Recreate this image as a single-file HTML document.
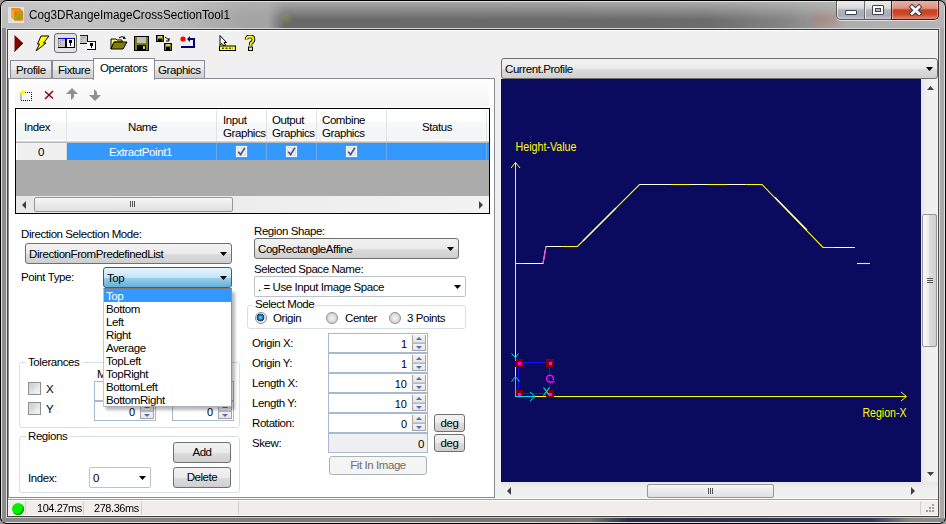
<!DOCTYPE html>
<html><head><meta charset="utf-8">
<style>
*{box-sizing:border-box}
html,body{margin:0;padding:0}
body{width:946px;height:524px;overflow:hidden;position:relative;background:#9a9a9a;font-family:"Liberation Sans",sans-serif;font-size:11px;color:#000}
.a{position:absolute}
.t{position:absolute;white-space:nowrap;line-height:13px;letter-spacing:-0.42px;font-size:11.5px}
.combo{position:absolute;border:1px solid #707070;border-radius:3px;background:linear-gradient(#f2f2f2,#ebebeb 50%,#dddddd 51%,#cfcfcf)}
.combo .arr,.arr{position:absolute;right:4px;top:8px;width:7px;height:4px;background:#000;clip-path:polygon(0 0,100% 0,50% 100%)}
.edit{position:absolute;border:1px solid #bac4d0;border-radius:2px;background:#fff}
.btn{position:absolute;font-size:11.5px;letter-spacing:-0.42px;border:1px solid #707070;border-radius:3px;background:linear-gradient(#f2f2f2,#ebebeb 50%,#dddddd 51%,#cfcfcf);text-align:center;line-height:18px}
.grp{position:absolute;border:1px solid #d5dfe5;border-radius:3px}
.chk{position:absolute;width:13px;height:13px;border:1px solid #8e8f8f;background:linear-gradient(135deg,#cbcfd5,#f6f6f6)}
.chk::after{content:"";position:absolute;left:2px;top:2px;width:7px;height:7px;background:linear-gradient(135deg,#cacdd2,#f4f4f4)}
.spin{position:absolute;border:1px solid #a7b9d1;background:#fff}
.spin .up,.spin .dn{position:absolute;right:1px;width:14px;height:8px;border-left:1px solid #a3a3a3;border-right:1px solid #a3a3a3;background:linear-gradient(#f3f3f3,#e6e6e6)}
.spin .up{top:1px;border-bottom:1px solid #c8c8c8}.spin .dn{top:9px;border-top:1px solid #b8b8b8;border-bottom:1px solid #a3a3a3}
.spin .up::after{content:"";position:absolute;left:3px;top:2px;border-left:3px solid transparent;border-right:3px solid transparent;border-bottom:3px solid #4d6fb8}
.spin .dn::after{content:"";position:absolute;left:3px;top:2px;border-left:3px solid transparent;border-right:3px solid transparent;border-top:3px solid #4d6fb8}
.spin .v{position:absolute;right:20px;top:4px}
</style></head><body>
<!-- window frame -->
<div class="a" style="left:0;top:0;width:946px;height:524px;border-radius:7px;background:#000"></div>
<div class="a" style="left:1px;top:1px;width:944px;height:522px;border-radius:6px;background:#e0e0e0"></div>
<div class="a" style="left:2px;top:2px;width:942px;height:520px;border-radius:5px;background:linear-gradient(90deg,#8c8c8c,#999 30%,#a0a0a0 70%,#a8a8a8)"></div>
<div class="a" style="left:2px;top:2px;width:942px;height:26px;border-radius:5px 5px 0 0;background:linear-gradient(90deg,#bdbdbd,#c2c2c2 8%,#bababa 18%,#a4a4a4 26%,#a5a5a5 60%,#ababab 85%,#b4b4b4)"></div>
<div class="a" style="left:2px;top:2px;width:942px;height:26px;border-radius:5px 5px 0 0;background:linear-gradient(rgba(255,255,255,.12),rgba(255,255,255,0) 60%)"></div>
<div class="a" style="left:268px;top:2px;width:577px;height:26px;background:linear-gradient(rgba(0,0,0,.04),rgba(0,0,0,.22) 40%,rgba(0,0,0,.36) 70%,rgba(0,0,0,.36));-webkit-mask-image:linear-gradient(90deg,transparent,#000 3%,#000 76%,rgba(0,0,0,.6) 90%,transparent)"></div>
<div class="a" style="left:812px;top:14px;width:26px;height:10px;background:rgba(200,90,70,.3);filter:blur(4px)"></div>
<div class="a" style="left:282px;top:14px;width:8px;height:8px;background:rgba(190,160,60,.35);filter:blur(2px)"></div>
<div class="a" style="left:6px;top:28px;width:934px;height:490px;border:1px solid #d8d8d8;border-bottom-color:#c8c8c8"></div>
<!-- app icon -->
<svg class="a" style="left:8px;top:7px" width="16" height="16" viewBox="0 0 16 16">
<rect x="0" y="0" width="16" height="16" fill="#e2e2e2"/>
<path d="M3 1 L11.5 1 L15 4.3 L15 13.5 L6.3 13.5 L3 10.4Z" fill="#f7a23c"/>
<path d="M6.3 4.3 L15 4.3 L15 13.5 L6.3 13.5Z" fill="#e07a08"/>
<path d="M3 1 L11.5 1 L15 4.3 L6.3 4.3Z" fill="#f58c10"/>
<path d="M6 12.5 L9.7 9.2 L9.7 6.4 L13.3 6.4 L13.3 12.5 L15 12.5" stroke="#00ff30" stroke-width="1.2" fill="none"/>
</svg>
<div class="t" style="left:29px;top:7px;font-size:12px;line-height:16px;color:#000;letter-spacing:0;transform:scaleX(0.975);transform-origin:0 0">Cog3DRangeImageCrossSectionTool1</div>
<!-- caption buttons -->
<div class="a" style="left:836px;top:1px;width:56px;height:19px;border:1px solid #5d5d5d;border-top:none;border-radius:0 0 0 5px;background:linear-gradient(#ececec,#dadada 40%,#b0b3ba 50%,#a8abb4 80%,#c4c6cc);box-shadow:0 1px 0 rgba(255,255,255,.6),inset 1px 0 0 rgba(255,255,255,.6)"></div>
<div class="a" style="left:864px;top:1px;width:1px;height:18px;background:#6a6a6a"></div>
<div class="a" style="left:865px;top:1px;width:1px;height:18px;background:#e8e8e8"></div>
<div class="a" style="left:845px;top:10px;width:12px;height:5px;border:1px solid #3a4058;border-radius:1px;background:#fff"></div>
<div class="a" style="left:872px;top:5px;width:12px;height:10px;border:1px solid #3a4058;border-radius:1px;background:#fff"></div>
<div class="a" style="left:875px;top:8px;width:6px;height:4px;border:1px solid #3a4058;background:#b8b8b8"></div>
<div class="a" style="left:891px;top:1px;width:48px;height:19px;border:1px solid #5a1408;border-top:none;border-radius:0 0 5px 0;background:linear-gradient(#eab2a4,#dc9080 40%,#c8401f 50%,#cc4a2c 75%,#e08a70);box-shadow:0 1px 0 rgba(255,255,255,.6),inset 1px 0 0 rgba(255,220,210,.5),inset -1px 0 0 rgba(255,220,210,.5)"></div>
<svg class="a" style="left:909px;top:4px" width="13" height="12" viewBox="0 0 13 12"><path d="M3 3 L10 9.5 M10 3 L3 9.5" stroke="#353a4c" stroke-width="4.8" stroke-linecap="square"/><path d="M3 3 L10 9.5 M10 3 L3 9.5" stroke="#fafafa" stroke-width="2.8" stroke-linecap="square"/></svg>
<!-- client area -->
<div class="a" style="left:7px;top:29px;width:932px;height:488px;background:#f0f0f0;border:1px solid #3a3a3a;border-left-color:#4a4a4a;border-right-color:#505050;border-bottom-color:#404040"></div>
<div class="a" style="left:8px;top:30px;width:930px;height:1px;background:#fff"></div>

<!-- toolbar icons -->
<svg class="a" style="left:14px;top:35px" width="10" height="17" viewBox="0 0 10 17"><path d="M0.5 0 L9 8 L0.5 16.5Z" fill="#800000"/><path d="M9 8 L0.5 16.5" stroke="#000" stroke-width="1"/></svg>
<svg class="a" style="left:35px;top:35px" width="15" height="17" viewBox="0 0 15 17"><path d="M6 1 L14 1 L8.5 8 L11 8 L1 16 L4.5 9 L2.5 9 Z" fill="#ffff00" stroke="#000" stroke-width="1"/></svg>
<div class="a" style="left:54px;top:33px;width:23px;height:20px;border:1px solid #6e6e6e;border-radius:3px;background:linear-gradient(#dcdcdc,#e4e4e4)"></div>
<svg class="a" style="left:58px;top:38px" width="17" height="10" viewBox="0 0 17 10" shape-rendering="crispEdges"><rect x="0" y="0" width="8" height="10" fill="#000"/><rect x="1" y="1" width="6" height="8" fill="#c8c8c8"/><rect x="0" y="1" width="1" height="8" fill="#909090"/><rect x="2" y="2" width="4" height="1" fill="#a8a8a8"/><rect x="2" y="4" width="1" height="1" fill="#909090"/><rect x="2" y="6" width="1" height="1" fill="#909090"/><rect x="8" y="0" width="9" height="10" fill="#000"/><rect x="9" y="1" width="7" height="8" fill="#fff"/><rect x="1" y="0" width="15" height="1" fill="#0000ff"/><rect x="11" y="2" width="3" height="3" fill="#000"/><rect x="12" y="5" width="1" height="3" fill="#000"/></svg>
<svg class="a" style="left:80px;top:35px" width="16" height="15" viewBox="0 0 16 15" shape-rendering="crispEdges"><rect x="0" y="0" width="8" height="9" fill="#000"/><rect x="0" y="1" width="7" height="7" fill="#c8c8c8"/><rect x="0" y="0" width="7" height="1" fill="#0000ff"/><rect x="1" y="2" width="4" height="1" fill="#a8a8a8"/><rect x="1" y="4" width="1" height="1" fill="#909090"/><rect x="1" y="6" width="1" height="1" fill="#909090"/><rect x="7" y="6" width="9" height="9" fill="#000"/><rect x="7" y="7" width="8" height="7" fill="#fff"/><rect x="7" y="6" width="8" height="1" fill="#0000ff"/><rect x="10" y="8" width="3" height="3" fill="#000"/><rect x="11" y="11" width="1" height="2" fill="#000"/></svg>
<svg class="a" style="left:110px;top:35px" width="18" height="15" viewBox="0 0 18 15"><path d="M1 4 L6 4 L7 5 L12 5 L12 7 L4 7 L1 14Z" fill="#ffff60" stroke="#000"/><path d="M1 14 L4 7 L17 7 L13 14Z" fill="#808000" stroke="#000"/><path d="M9 3 Q12 0 15 3" stroke="#000" fill="none"/><path d="M14 1 L16 4 L13 4Z" fill="#000"/></svg>
<svg class="a" style="left:134px;top:36px" width="16" height="15" viewBox="0 0 16 15"><rect x="0.5" y="0.5" width="14" height="14" fill="#808000" stroke="#000"/><rect x="3" y="1" width="9" height="6" fill="#c0c0c0"/><rect x="3" y="9" width="9" height="5" fill="#000"/><rect x="9" y="10" width="2" height="3" fill="#c0c0c0"/></svg>
<svg class="a" style="left:156px;top:35px" width="17" height="16" viewBox="0 0 17 16"><rect x="0.5" y="0.5" width="7" height="6" fill="#808000" stroke="#000"/><rect x="2" y="1" width="4" height="2" fill="#c0c0c0"/><rect x="2" y="4" width="4" height="2" fill="#000"/><rect x="8.5" y="8.5" width="7" height="7" fill="#808000" stroke="#000"/><rect x="10" y="9" width="4" height="2" fill="#c0c0c0"/><rect x="10" y="12" width="4" height="3" fill="#000"/><path d="M9 2 L13 5 M13 3 V6 H10" stroke="#000" fill="none"/></svg>
<svg class="a" style="left:180px;top:35px" width="17" height="14" viewBox="0 0 17 14"><circle cx="3" cy="4" r="2.6" fill="#ff0000"/><path d="M7 4 L10 1 L10 3 L15 3 L15 13 L1 13 L1 11 L13 11 L13 5 L10 5 L10 7Z" fill="#000080"/></svg>
<svg class="a" style="left:219px;top:35px" width="17" height="16" viewBox="0 0 17 16"><path d="M1 0.5 L1 10 L3 8.5 L5 11 L6.5 10 L5 7.5 L7.5 7.5Z" fill="#fff" stroke="#000"/><rect x="0.5" y="11" width="16" height="4.5" fill="#ffff00" stroke="#000"/><path d="M3 13.2 H14" stroke="#000" stroke-dasharray="2 1.5"/></svg>
<svg class="a" style="left:244px;top:35px" width="12" height="16" viewBox="0 0 12 16"><path d="M2.5 4.5 Q2.5 1.5 6 1.5 Q9.5 1.5 9.5 4.5 Q9.5 6.5 7 8 L6.5 10.5" stroke="#000" stroke-width="3.6" fill="none"/><path d="M2.5 4.5 Q2.5 1.5 6 1.5 Q9.5 1.5 9.5 4.5 Q9.5 6.5 7 8 L6.5 10.5" stroke="#ffff00" stroke-width="1.8" fill="none"/><rect x="4.5" y="12" width="4" height="3.5" fill="#ffff00" stroke="#000"/></svg>

<!-- tabs -->
<div class="a" style="left:10px;top:60px;width:42px;height:19px;border:1px solid #898c95;border-bottom:none;background:linear-gradient(#f2f2f2,#ebebeb 50%,#dddddd 51%,#cfcfcf)"></div>
<div class="t" style="left:16px;top:64px">Profile</div>
<div class="a" style="left:52px;top:60px;width:42px;height:19px;border:1px solid #898c95;border-bottom:none;background:linear-gradient(#f2f2f2,#ebebeb 50%,#dddddd 51%,#cfcfcf)"></div>
<div class="t" style="left:58px;top:64px">Fixture</div>
<div class="a" style="left:154px;top:60px;width:51px;height:19px;border:1px solid #898c95;border-bottom:none;border-left:none;background:linear-gradient(#f2f2f2,#ebebeb 50%,#dddddd 51%,#cfcfcf)"></div>
<div class="t" style="left:158px;top:64px">Graphics</div>
<!-- tab page -->
<div class="a" style="left:8px;top:78px;width:487px;height:420px;background:#fff;border:1px solid #898c95"></div>
<div class="a" style="left:93px;top:58px;width:62px;height:22px;border:1px solid #898c95;border-bottom:none;background:#fff"></div>
<div class="t" style="left:100px;top:62px">Operators</div>

<!-- operators toolbar -->
<div class="a" style="left:15px;top:82px;width:474px;height:25px;border-radius:3px;background:linear-gradient(#fdfdfd,#f4f4f4)"></div>
<svg class="a" style="left:19px;top:89px" width="13" height="12" viewBox="0 0 13 12"><path d="M2 3.5 V11.5 H12.5 V3.5 H6" stroke="#000" stroke-dasharray="1 1" fill="none"/><path d="M3 0 L4 2 L6 1 L5 3 L7 4 L5 4.5 L5.5 7 L3.5 5 L1.5 6.5 L2 4.5 L0 3.5 L2 3 Z" fill="#ffff00"/></svg>
<svg class="a" style="left:44px;top:90px" width="10" height="10" viewBox="0 0 10 10"><path d="M1 1.5 L9 8.5 M9 1 L1 9" stroke="#8a0000" stroke-width="1.5"/></svg>
<svg class="a" style="left:66px;top:88px" width="12" height="13" viewBox="0 0 12 13"><path d="M6 0 L12 6 L8 6 L8 9 L5 12 L5 6 L0 6Z" fill="#909090"/></svg>
<svg class="a" style="left:89px;top:88px" width="12" height="13" viewBox="0 0 12 13"><path d="M6 13 L12 7 L8 7 L8 4 L5 1 L5 7 L0 7Z" fill="#909090"/></svg>

<!-- grid -->
<div class="a" style="left:15px;top:108px;width:475px;height:106px;border:1px solid #000;background:#ababab"></div>
<div class="a" style="left:16px;top:109px;width:473px;height:34px;background:linear-gradient(#ffffff 0,#ffffff 40%,#f7f8fa 41%,#f3f4f6 92%,#fdfdfd 93%,#fdfdfd 96%,#d5d5d5 97%);border-bottom:1px solid #b8b8b8"></div>
<div class="a" style="left:66px;top:110px;width:1px;height:31px;background:#e2e3e5"></div>
<div class="a" style="left:216px;top:110px;width:1px;height:31px;background:#e2e3e5"></div>
<div class="a" style="left:266px;top:110px;width:1px;height:31px;background:#e2e3e5"></div>
<div class="a" style="left:316px;top:110px;width:1px;height:31px;background:#e2e3e5"></div>
<div class="a" style="left:386px;top:110px;width:1px;height:31px;background:#e2e3e5"></div>
<div class="a" style="left:486px;top:110px;width:1px;height:31px;background:#e2e3e5"></div>
<div class="t" style="left:24px;top:121px">Index</div>
<div class="t" style="left:128px;top:121px">Name</div>
<div class="t" style="left:223px;top:114px;line-height:12.5px">Input<br>Graphics</div>
<div class="t" style="left:272px;top:114px;line-height:12.5px">Output<br>Graphics</div>
<div class="t" style="left:322px;top:114px;line-height:12.5px">Combine<br>Graphics</div>
<div class="t" style="left:422px;top:121px">Status</div>
<!-- row -->
<div class="a" style="left:16px;top:143px;width:51px;height:17px;background:#f0f0f0;border-left:1px solid #fff;border-right:1px solid #d8d8d8"></div>
<div class="t" style="left:38px;top:146px">0</div>
<div class="a" style="left:67px;top:143px;width:422px;height:17px;background:#3399ff"></div>
<div class="a" style="left:216px;top:143px;width:1px;height:17px;background:#6aa8e8"></div>
<div class="a" style="left:266px;top:143px;width:1px;height:17px;background:#6aa8e8"></div>
<div class="a" style="left:316px;top:143px;width:1px;height:17px;background:#6aa8e8"></div>
<div class="a" style="left:386px;top:143px;width:1px;height:17px;background:#6aa8e8"></div>
<div class="a" style="left:486px;top:143px;width:1px;height:17px;background:#6aa8e8"></div>
<div class="t" style="left:109px;top:146px;color:#fff">ExtractPoint1</div>
<svg class="a" style="left:235px;top:145px" width="13" height="13" viewBox="0 0 13 13"><rect x="0.5" y="0.5" width="12" height="12" fill="#fff" stroke="#8f8a82"/><rect x="2" y="2" width="9" height="9" fill="#dcdcdc"/><rect x="3" y="3" width="7" height="7" fill="#eeeeee"/><path d="M3.3 6.8 L5.6 9.6 L9.8 2.8" stroke="#3b4e8e" stroke-width="1.6" fill="none"/></svg>
<svg class="a" style="left:285px;top:145px" width="13" height="13" viewBox="0 0 13 13"><rect x="0.5" y="0.5" width="12" height="12" fill="#fff" stroke="#8f8a82"/><rect x="2" y="2" width="9" height="9" fill="#dcdcdc"/><rect x="3" y="3" width="7" height="7" fill="#eeeeee"/><path d="M3.3 6.8 L5.6 9.6 L9.8 2.8" stroke="#3b4e8e" stroke-width="1.6" fill="none"/></svg>
<svg class="a" style="left:345px;top:145px" width="13" height="13" viewBox="0 0 13 13"><rect x="0.5" y="0.5" width="12" height="12" fill="#fff" stroke="#8f8a82"/><rect x="2" y="2" width="9" height="9" fill="#dcdcdc"/><rect x="3" y="3" width="7" height="7" fill="#eeeeee"/><path d="M3.3 6.8 L5.6 9.6 L9.8 2.8" stroke="#3b4e8e" stroke-width="1.6" fill="none"/></svg>
<!-- grid hscroll -->
<div class="a" style="left:16px;top:196px;width:473px;height:17px;background:linear-gradient(90deg,#e8e8e8,#f2f2f2)"></div>
<div class="a" style="left:34px;top:197px;width:199px;height:15px;border:1px solid #979797;border-radius:2px;background:linear-gradient(#f6f6f6,#e0e0e0)"></div>
<div class="a" style="left:130px;top:201px;width:1px;height:6px;background:#555;box-shadow:2px 0 0 #555,4px 0 0 #555"></div>
<div class="a" style="left:22px;top:201px;width:0;height:0;border-top:4px solid transparent;border-bottom:4px solid transparent;border-right:4px solid #404040"></div>
<div class="a" style="left:479px;top:201px;width:0;height:0;border-top:4px solid transparent;border-bottom:4px solid transparent;border-left:4px solid #404040"></div>

<!-- left controls -->
<div class="t" style="left:21px;top:228px">Direction Selection Mode:</div>
<div class="combo" style="left:25px;top:243px;width:207px;height:21px"><div class="t" style="left:3px;top:4px">DirectionFromPredefinedList</div><div class="arr"></div></div>
<div class="t" style="left:21px;top:271px">Point Type:</div>
<div class="combo" style="left:103px;top:267px;width:129px;height:21px;border-color:#2c628b;background:linear-gradient(#e5f4fc,#c4e5f6 50%,#98d1ef 51%,#66afd7)"><div class="t" style="left:3px;top:4px">Top</div><div class="arr"></div></div>
<!-- Tolerances group -->
<div class="grp" style="left:19px;top:362px;width:221px;height:66px"></div>
<div class="a" style="left:26px;top:356px;width:57px;height:12px;background:#fff"></div>
<div class="t" style="left:28px;top:356px">Tolerances</div>
<div class="t" style="left:97px;top:368px">Min</div>
<div class="chk" style="left:28px;top:382px"></div>
<div class="t" style="left:46px;top:383px">X</div>
<div class="chk" style="left:28px;top:402px"></div>
<div class="t" style="left:46px;top:403px">Y</div>
<div class="spin" style="left:94px;top:381px;width:62px;height:20px"><div class="up"></div><div class="dn"></div><div class="v">0</div></div>
<div class="spin" style="left:172px;top:381px;width:62px;height:20px"><div class="up"></div><div class="dn"></div><div class="v">0</div></div>
<div class="spin" style="left:94px;top:401px;width:62px;height:20px"><div class="up"></div><div class="dn"></div><div class="v">0</div></div>
<div class="spin" style="left:172px;top:401px;width:62px;height:20px"><div class="up"></div><div class="dn"></div><div class="v">0</div></div>
<!-- Regions group -->
<div class="grp" style="left:19px;top:436px;width:221px;height:57px"></div>
<div class="a" style="left:26px;top:430px;width:44px;height:12px;background:#fff"></div>
<div class="t" style="left:28px;top:430px">Regions</div>
<div class="btn" style="left:173px;top:442px;width:58px;height:21px;line-height:19px">Add</div>
<div class="btn" style="left:173px;top:467px;width:58px;height:21px;line-height:19px">Delete</div>
<div class="t" style="left:28px;top:472px">Index:</div>
<div class="edit" style="left:89px;top:467px;width:62px;height:21px"><div class="t" style="left:3px;top:4px">0</div><div class="arr"></div></div>

<!-- dropdown list -->
<div class="a" style="left:106px;top:292px;width:129px;height:118px;background:rgba(0,0,0,.28);filter:blur(1.5px)"></div>
<div class="a" style="left:103px;top:288px;width:129px;height:119px;background:#fff;border:1px solid #8a92a0;border-left-color:#c4c8d0;border-top-color:#7c7c7c;border-bottom-color:#aab0ba"></div>
<div class="a" style="left:104px;top:289px;width:127px;height:13px;background:#3399ff"></div>
<div class="t" style="left:106px;top:290px;color:#fff">Top</div>
<div class="t" style="left:106px;top:303px">Bottom</div>
<div class="t" style="left:106px;top:316px">Left</div>
<div class="t" style="left:106px;top:329px">Right</div>
<div class="t" style="left:106px;top:342px">Average</div>
<div class="t" style="left:106px;top:355px">TopLeft</div>
<div class="t" style="left:106px;top:368px">TopRight</div>
<div class="t" style="left:106px;top:381px">BottomLeft</div>
<div class="t" style="left:106px;top:394px">BottomRight</div>

<!-- middle controls -->
<div class="t" style="left:254px;top:225px">Region Shape:</div>
<div class="combo" style="left:254px;top:238px;width:205px;height:21px"><div class="t" style="left:3px;top:4px">CogRectangleAffine</div><div class="arr"></div></div>
<div class="t" style="left:254px;top:263px">Selected Space Name:</div>
<div class="edit" style="left:254px;top:276px;width:212px;height:21px"><div class="t" style="left:3px;top:4px">. = Use Input Image Space</div><div class="arr"></div></div>
<div class="grp" style="left:247px;top:305px;width:219px;height:24px"></div>
<div class="a" style="left:252px;top:298px;width:64px;height:12px;background:#fff"></div>
<div class="t" style="left:255px;top:298px">Select Mode</div>
<div class="a" style="left:255px;top:312px;width:12px;height:12px;border-radius:50%;border:1px solid #8e8f8f;background:radial-gradient(circle at 45% 45%,#7fd0ff 0,#1f9ae0 1.6px,#1a6aa8 2.6px,#183a5a 3.6px,#f4f4f4 4.2px,#dcdcdc 6px)"></div>
<div class="t" style="left:273px;top:312px">Origin</div>
<div class="a" style="left:326px;top:312px;width:12px;height:12px;border-radius:50%;border:1px solid #8e8f8f;background:radial-gradient(circle,#f6f6f6 0,#cbcbcb 6px)"></div>
<div class="t" style="left:345px;top:312px">Center</div>
<div class="a" style="left:389px;top:312px;width:12px;height:12px;border-radius:50%;border:1px solid #8e8f8f;background:radial-gradient(circle,#f6f6f6 0,#cbcbcb 6px)"></div>
<div class="t" style="left:407px;top:312px">3 Points</div>

<div class="t" style="left:252px;top:337px">Origin X:</div>
<div class="t" style="left:252px;top:357px">Origin Y:</div>
<div class="t" style="left:252px;top:377px">Length X:</div>
<div class="t" style="left:252px;top:397px">Length Y:</div>
<div class="t" style="left:252px;top:417px">Rotation:</div>
<div class="t" style="left:252px;top:437px">Skew:</div>
<div class="spin" style="left:328px;top:333px;width:100px;height:20px"><div class="up"></div><div class="dn"></div><div class="v">1</div></div>
<div class="spin" style="left:328px;top:353px;width:100px;height:20px"><div class="up"></div><div class="dn"></div><div class="v">1</div></div>
<div class="spin" style="left:328px;top:373px;width:100px;height:20px"><div class="up"></div><div class="dn"></div><div class="v">10</div></div>
<div class="spin" style="left:328px;top:393px;width:100px;height:20px"><div class="up"></div><div class="dn"></div><div class="v">10</div></div>
<div class="spin" style="left:328px;top:413px;width:100px;height:20px"><div class="up"></div><div class="dn"></div><div class="v">0</div></div>
<div class="a" style="left:328px;top:433px;width:100px;height:20px;border:1px solid #a7b9d1;background:#f0f0f0"><div class="t" style="right:3px;top:4px">0</div></div>
<div class="btn" style="left:434px;top:414px;width:31px;height:18px;line-height:16px">deg</div>
<div class="btn" style="left:434px;top:434px;width:31px;height:18px;line-height:16px">deg</div>
<div class="a" style="left:329px;top:456px;width:98px;height:19px;border:1px solid #adb2b5;border-radius:3px;background:#f4f4f4;color:#6d6d6d;text-align:center;line-height:17px;font-size:11.5px;letter-spacing:-0.42px">Fit In Image</div>

<!-- right panel -->
<div class="combo" style="left:501px;top:58px;width:437px;height:21px"><div class="t" style="left:3px;top:4px">Current.Profile</div><div class="arr"></div></div>
<div class="a" style="left:501px;top:79px;width:420px;height:403px;background:#0a0a5e"></div>
<!-- vscroll -->
<div class="a" style="left:921px;top:79px;width:17px;height:403px;background:linear-gradient(90deg,#e6e6e6,#f0f0f0 40%,#f0f0f0)"></div>
<div class="a" style="left:927px;top:86px;width:7px;height:4px;background:#404040;clip-path:polygon(50% 0,100% 100%,0 100%)"></div>
<div class="a" style="left:927px;top:472px;width:7px;height:4px;background:#404040;clip-path:polygon(0 0,100% 0,50% 100%)"></div>
<div class="a" style="left:922px;top:214px;width:15px;height:133px;border:1px solid #979797;border-radius:2px;background:linear-gradient(90deg,#f8f8f8,#ececec 45%,#dcdcdc 50%,#cfcfd2)"></div>
<div class="a" style="left:927px;top:278px;width:6px;height:1px;background:#555;box-shadow:0 2px 0 #555,0 4px 0 #555"></div>
<!-- hscroll -->
<div class="a" style="left:501px;top:482px;width:437px;height:17px;background:linear-gradient(#e6e6e6,#f0f0f0 40%)"></div>
<div class="a" style="left:507px;top:487px;width:0;height:0;border-top:4px solid transparent;border-bottom:4px solid transparent;border-right:4px solid #404040"></div>
<div class="a" style="left:911px;top:487px;width:0;height:0;border-top:4px solid transparent;border-bottom:4px solid transparent;border-left:4px solid #404040"></div>
<div class="a" style="left:647px;top:484px;width:127px;height:14px;border:1px solid #979797;border-radius:2px;background:linear-gradient(#f6f6f6,#e0e0e0)"></div>
<div class="a" style="left:708px;top:488px;width:1px;height:6px;background:#555;box-shadow:2px 0 0 #555,4px 0 0 #555"></div>

<!-- graph -->
<svg class="a" style="left:501px;top:79px" width="420" height="403" viewBox="501 79 420 403">
<g fill="none" shape-rendering="crispEdges">
<path d="M515.5 162 V376" stroke="#ffff00"/>
<path d="M535 396.5 H906" stroke="#ffff00"/>
</g>
<g fill="none">
<path d="M511 168 L515.5 162.5 L520 168" stroke="#ffff00"/>
<path d="M901 392 L906.5 396.5 L901 401" stroke="#ffff00"/>
</g>
<g fill="none" stroke-width="1.1">
<path d="M515 263.5 H543 L546 246.5 H577.5 L639.5 184.5 H762 L823 247.5 H855" stroke="#ffff00"/>
<path d="M524 263.5 H543 M546 246.5 H561 M583 241 L616 208 M640 184.5 H671 M689 184.5 H708 M727 184.5 H745 M775 197.5 L807 230 M835 247.5 H853" stroke="#ffffff"/>
<path d="M543 263.5 L546 246.5" stroke="#ff40ff"/>
<path d="M857 263.5 H870" stroke="#ffff00"/>
</g>
<!-- region rect -->
<g fill="none" shape-rendering="crispEdges">
<path d="M518.5 362.5 H549.5 V393.5 H518.5 Z" stroke="#1010ff" stroke-width="1.6"/>
<rect x="515" y="359" width="8" height="8" fill="#800000"/>
<rect x="546" y="359" width="8" height="8" fill="#800000"/>
<rect x="515" y="390" width="8" height="8" fill="#800000"/>
<rect x="546" y="390" width="8" height="8" fill="#800000"/>
<rect x="518" y="362" width="3" height="3" fill="#ff00ff"/>
<rect x="549" y="362" width="3" height="3" fill="#ff00ff"/>
<rect x="518" y="393" width="3" height="3" fill="#ff00ff"/>
<rect x="549" y="393" width="3" height="3" fill="#ff00ff"/>
<path d="M515.5 376 V397 M515 396.5 H535" stroke="#00e0e0"/>
</g>
<g fill="none" stroke="#00e0e0" stroke-width="1">
<path d="M511.5 381.5 L515.5 376.5 L519.5 381.5"/>
<path d="M530 392 L535 396.5 L530 401"/>
<path d="M511.5 353.5 L515.5 357.5 L518.5 353.5 M515.5 357.5 V361"/>
<path d="M543.5 387.5 L549.5 395.5 M549.5 387.5 L543.5 395.5" stroke-width="1.2"/>
</g>
<path d="M552.94 380.30 L553.28 379.48 L553.40 378.60 L553.28 377.72 L552.94 376.90 L552.40 376.20 L551.70 375.66 L550.88 375.32 L550.00 375.20 L549.12 375.32 L548.30 375.66 L547.60 376.20 L547.06 376.90 L546.72 377.72 L546.60 378.60 L546.72 379.48 L547.06 380.30 L547.60 381.00 L548.30 381.54 L549.12 381.88 L550.00 382.00 H554.5" stroke="#ff00ff" stroke-width="1.4" fill="none"/>

<text x="515.5" y="150.5" fill="#ffff00" font-family="Liberation Sans" font-size="12" textLength="61" lengthAdjust="spacingAndGlyphs">Height-Value</text>
<text x="862.5" y="417" fill="#ffff00" font-family="Liberation Sans" font-size="12" textLength="44" lengthAdjust="spacingAndGlyphs">Region-X</text>
</svg>
<!-- status bar -->
<div class="a" style="left:8px;top:498px;width:930px;height:1px;background:#fafafa"></div>
<div class="a" style="left:8px;top:499px;width:930px;height:1px;background:#a0a0a0"></div>
<div class="a" style="left:8px;top:500px;width:930px;height:16px;background:#f0edeb;border-top:1px solid #fff;border-bottom:1px solid #fff"></div>
<div class="a" style="left:12px;top:503px;width:12px;height:12px;border-radius:50%;background:#00f000;box-shadow:inset -1px -1px 0 #008a00"></div>
<div class="a" style="left:25px;top:501px;width:1px;height:14px;background:#d0d0d0"></div>
<div class="t" style="left:37px;top:502px;transform:scaleX(.95);transform-origin:0 0">104.27ms</div>
<div class="a" style="left:83px;top:501px;width:1px;height:14px;background:#d0d0d0"></div>
<div class="t" style="left:94px;top:502px;transform:scaleX(.95);transform-origin:0 0">278.36ms</div>
<div class="a" style="left:141px;top:501px;width:1px;height:14px;background:#d0d0d0"></div>
<div class="a" style="left:238px;top:501px;width:1px;height:14px;background:#d0d0d0"></div>
<div class="a" style="left:920px;top:501px;width:1px;height:14px;background:#d0d0d0"></div>
<!-- bottom frame -->
<div class="a" style="left:2px;top:518px;width:942px;height:4px;background:linear-gradient(90deg,#8c8c8c,#7a7a7a 30%,#747474 60%,#8a8a8a)"></div>
<div class="a" style="left:590px;top:518px;width:320px;height:4px;background:linear-gradient(90deg,rgba(30,30,60,0),rgba(30,30,60,.85) 12%,rgba(40,40,80,.85) 88%,rgba(30,30,60,0));"></div>
<div class="a" style="left:920px;top:500px;width:18px;height:16px"><svg width="18" height="16" viewBox="0 0 18 16"><g fill="#a0a0a0"><rect x="12" y="4" width="2" height="2"/><rect x="9" y="7" width="2" height="2"/><rect x="12" y="7" width="2" height="2"/><rect x="6" y="10" width="2" height="2"/><rect x="9" y="10" width="2" height="2"/><rect x="12" y="10" width="2" height="2"/></g></svg></div>
</body></html>
